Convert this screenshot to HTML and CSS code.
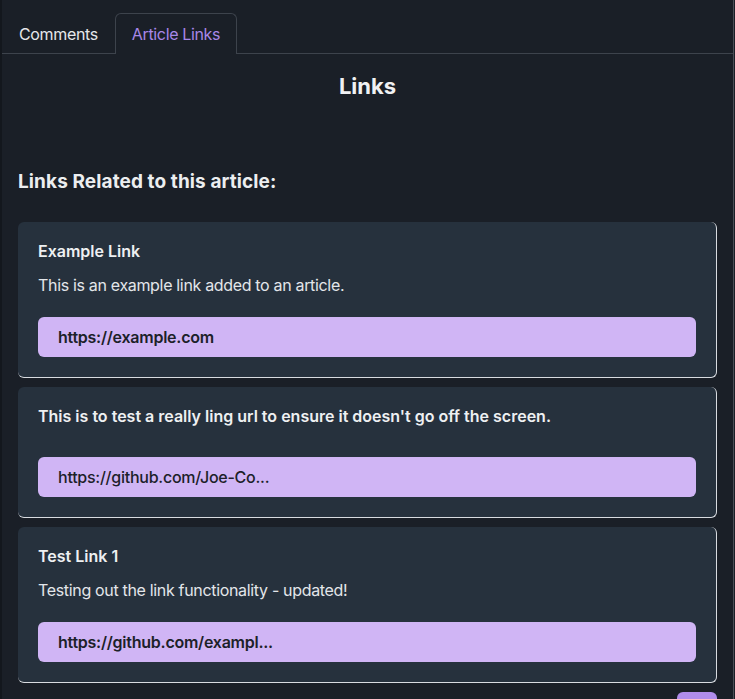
FILE: index.html
```html
<!DOCTYPE html>
<html>
<head>
<meta charset="utf-8">
<link rel="stylesheet" href="styles.css">
</head>
<body>
<div class="page">
  <div class="tabs">
    <div class="tab">Comments</div>
    <div class="tab active">Article Links</div>
  </div>
  <div class="content">
    <h1 class="title">Links</h1>
    <h2 class="subtitle">Links Related to this article:</h2>
    <div class="cards">
      <div class="card">
        <div class="card-title">Example Link</div>
        <div class="card-desc">This is an example link added to an article.</div>
        <div class="url">https://example.com</div>
      </div>
      <div class="card">
        <div class="card-title">This is to test a really ling url to ensure it doesn't go off the screen.</div>
        <div class="card-desc"></div>
        <div class="url url-light">https://github.com/Joe-Co...</div>
      </div>
      <div class="card">
        <div class="card-title">Test Link 1</div>
        <div class="card-desc">Testing out the link functionality - updated!</div>
        <div class="url">https://github.com/exampl...</div>
      </div>
    </div>
    <div class="actions"><div class="btn"></div></div>
  </div>
</div>
</body>
</html>
```
FILE: styles.css
```css
html, body {
  margin: 0;
  padding: 0;
  background: #1a1f27;
  height: 100%;
  overflow: hidden;
}
body {
  font-family: Inter, "Noto Sans", sans-serif;
  color: #e8eaed;
}
.page {
  min-height: 100%;
  border-left: 2px solid #13171d;
  border-right: 1px solid #4a4f57;
  margin-right: 1px;
  box-sizing: border-box;
  padding-top: 13px;
}
.tabs {
  display: flex;
  border-bottom: 1px solid #3d434c;
  height: 41px;
  box-sizing: border-box;
}
.tab {
  padding: 0 16px 1px;
  display: flex;
  align-items: center;
  font-size: 16px;
  letter-spacing: -0.35px;
  color: #e6e8eb;
  border: 1px solid transparent;
  border-bottom: none;
  border-radius: 6px 6px 0 0;
  margin-bottom: -1px;
  height: 41px;
  box-sizing: border-box;
}
.tab.active {
  color: #a887e8;
  border-color: #3d434c;
  background: #1a1f27;
}
.content {
  padding: 0 16px;
}
.title {
  margin: 18px 0 0;
  text-align: center;
  font-size: 22px;
  line-height: 28px;
  font-weight: 700;
  color: #f0f1f3;
}
.subtitle {
  margin: 69px 0 0;
  font-size: 19px;
  line-height: 26px;
  font-weight: 700;
  letter-spacing: 0.1px;
  color: #eceef0;
}
.cards {
  margin-top: 27px;
  display: flex;
  flex-direction: column;
  gap: 9px;
}
.card {
  background: #26313d;
  border-radius: 6px;
  border-right: 1px solid #d8dbe0;
  border-bottom: 1px solid #d8dbe0;
  padding: 20px;
  display: flex;
  flex-direction: column;
}
.card-title {
  font-size: 16px;
  font-weight: 600;
  line-height: 18px;
  color: #eef0f2;
  margin-bottom: 13px;
}
.card-desc {
  font-size: 16px;
  line-height: 24px;
  letter-spacing: -0.33px;
  color: #e3e6ea;
  margin-bottom: 20px;
}
.card-desc:empty {
  margin-bottom: 19px;
}
.url {
  background: #d0b5f5;
  color: #1c2129;
  border-radius: 6px;
  height: 40px;
  display: flex;
  align-items: center;
  padding-left: 20px;
  font-size: 16px;
  font-weight: 600;
  letter-spacing: -0.25px;
}
.url-light {
  font-weight: 500;
}
.actions {
  display: flex;
  justify-content: flex-end;
  margin-top: 9px;
}
.btn {
  width: 40px;
  height: 40px;
  background: #b08ceb;
  border-radius: 6px;
}
```
